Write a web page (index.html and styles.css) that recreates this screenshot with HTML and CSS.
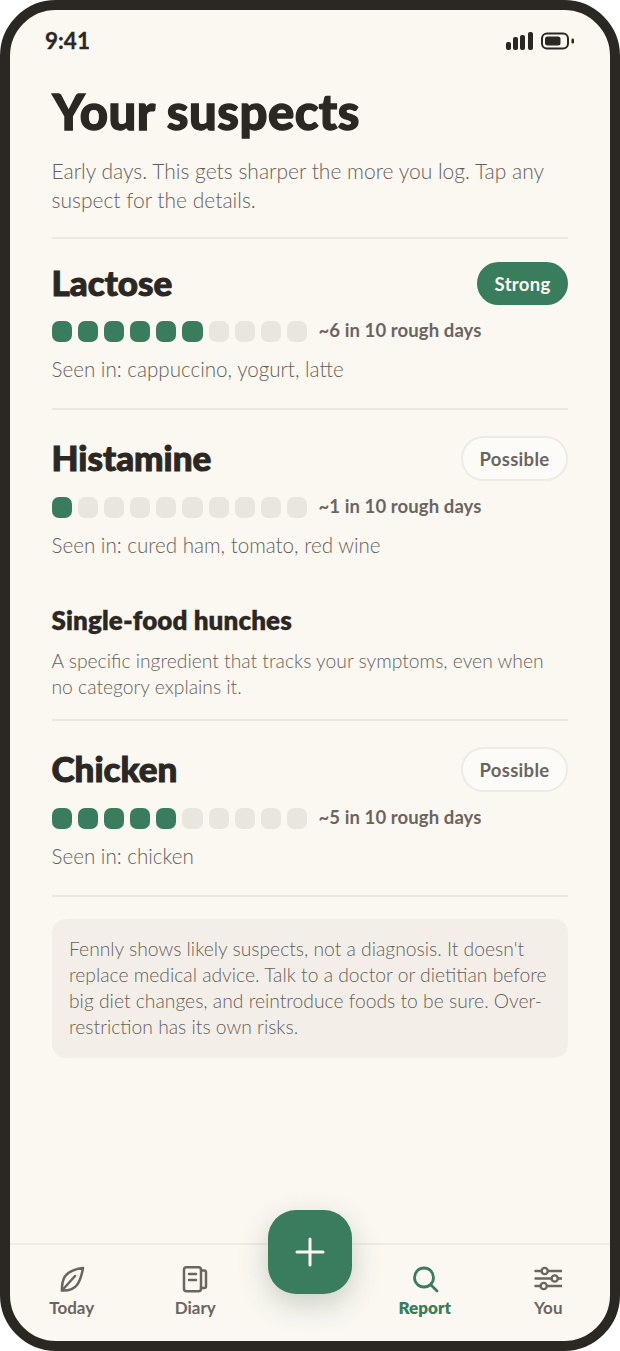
FILE: index.html
```html
<!DOCTYPE html>
<html lang="en">
<head>
    <meta charset="UTF-8">
    <meta name="viewport" content="width=device-width, initial-scale=1.0">
    <title>Your suspects</title>
    <link rel="stylesheet" href="styles.css">
</head>
<body>
    <div class="phone">
        <div class="status-bar">
            <span class="status-time">9:41</span>
            <div class="status-icons">
                <svg width="27" height="18" viewBox="0 0 27 18"><g fill="#2b2723"><rect x="0" y="10" width="5" height="8" rx="2"/><rect x="7" y="5" width="5" height="13" rx="2"/><rect x="14" y="3" width="5" height="15" rx="2"/><rect x="22" y="0" width="5" height="18" rx="2"/></g></svg>
                <svg width="33" height="18" viewBox="0 0 33 18"><rect x="1" y="1.500" width="26" height="15" rx="5" fill="none" stroke="#2b2723" stroke-width="2"/><rect x="4" y="4.500" width="15.500" height="9" rx="2.500" fill="#2b2723"/><rect x="30.500" y="6.500" width="2.500" height="5" rx="1.200" fill="#2b2723"/></svg>
            </div>
        </div>

        <main class="content">
            <h1 class="page-title">Your suspects</h1>
            <p class="page-intro">Early days. This gets sharper the more you log. Tap any suspect for the details.</p>

            <section class="suspect suspect-strong">
                <div class="suspect-head">
                    <h2 class="suspect-name">Lactose</h2>
                    <span class="pill pill-strong">Strong</span>
                </div>
                <div class="score">
                    <div class="dots">
                        <i class="dot on"></i><i class="dot on"></i><i class="dot on"></i><i class="dot on"></i><i class="dot on"></i><i class="dot on"></i><i class="dot"></i><i class="dot"></i><i class="dot"></i><i class="dot"></i>
                    </div>
                    <span class="score-text">~6 in 10 rough days</span>
                </div>
                <p class="seen-in">Seen in: cappuccino, yogurt, latte</p>
            </section>

            <section class="suspect suspect-open">
                <div class="suspect-head">
                    <h2 class="suspect-name">Histamine</h2>
                    <span class="pill">Possible</span>
                </div>
                <div class="score">
                    <div class="dots">
                        <i class="dot on"></i><i class="dot"></i><i class="dot"></i><i class="dot"></i><i class="dot"></i><i class="dot"></i><i class="dot"></i><i class="dot"></i><i class="dot"></i><i class="dot"></i>
                    </div>
                    <span class="score-text">~1 in 10 rough days</span>
                </div>
                <p class="seen-in">Seen in: cured ham, tomato, red wine</p>
            </section>

            <h3 class="hunch-title">Single-food hunches</h3>
            <p class="hunch-intro">A specific ingredient that tracks your symptoms, even when no category explains it.</p>

            <section class="suspect suspect-closed">
                <div class="suspect-head">
                    <h2 class="suspect-name">Chicken</h2>
                    <span class="pill">Possible</span>
                </div>
                <div class="score">
                    <div class="dots">
                        <i class="dot on"></i><i class="dot on"></i><i class="dot on"></i><i class="dot on"></i><i class="dot on"></i><i class="dot"></i><i class="dot"></i><i class="dot"></i><i class="dot"></i><i class="dot"></i>
                    </div>
                    <span class="score-text">~5 in 10 rough days</span>
                </div>
                <p class="seen-in">Seen in: chicken</p>
            </section>

            <p class="note">Fennly shows likely suspects, not a diagnosis. It doesn't replace medical advice. Talk to a doctor or dietitian before big diet changes, and reintroduce foods to be sure. Over-restriction has its own risks.</p>
        </main>

        <nav class="tab-bar">
            <a class="tab">
                <svg width="28" height="28" viewBox="0 0 28 28" fill="none" stroke="#6b6560" stroke-width="2.500" stroke-linecap="round" stroke-linejoin="round"><path d="M25 3C17 4 9 6.500 5.800 13.500 4.200 17 3.800 21 4 25.500c6 .3 11.500-.8 15-5.500 3.300-4.500 5-11 6-17z"/><path d="M4 25.500 17 11"/></svg>
                <span>Today</span>
            </a>
            <a class="tab">
                <svg width="28" height="28" viewBox="0 0 28 28" fill="none" stroke="#6b6560" stroke-width="2.500" stroke-linecap="round" stroke-linejoin="round"><rect x="3" y="2.300" width="17" height="24" rx="2.500"/><path d="M20 5.500h3.500a1.500 1.500 0 0 1 1.500 1.500v14.500a1.500 1.500 0 0 1-1.500 1.500H20"/><path d="M8 9h7M8 15h7"/></svg>
                <span>Diary</span>
            </a>
            <div class="tab-gap"></div>
            <a class="tab tab-active">
                <svg width="28" height="28" viewBox="0 0 28 28" fill="none" stroke="#3a7d5c" stroke-width="2.800" stroke-linecap="round" stroke-linejoin="round"><circle cx="13" cy="12.500" r="9.500"/><path d="M20 20l6 6"/></svg>
                <span>Report</span>
            </a>
            <a class="tab">
                <svg width="28" height="28" viewBox="0 0 28 28" fill="none" stroke="#6b6560" stroke-width="2.400" stroke-linecap="round"><path d="M1.500 6h6M14 6h13.500M1.500 13.500h16M24 13.500h3.500M1.500 21h5M13 21h14.500"/><circle cx="10.700" cy="6" r="3.100"/><circle cx="20.700" cy="13.500" r="3.100"/><circle cx="9.700" cy="21" r="3.100"/></svg>
                <span>You</span>
            </a>
        </nav>

        <button class="fab" aria-label="Add">
            <svg width="30" height="30" viewBox="0 0 30 30" stroke="#fbf8f2" stroke-width="3" stroke-linecap="round"><path d="M15 2v26M2 15h26"/></svg>
        </button>
    </div>
</body>
</html>
```

FILE: styles.css
```css
* {
    margin: 0;
    padding: 0;
    box-sizing: border-box;
}

body {
    font-family: "Lato", "Noto Sans", sans-serif;
    background: #fff;
    color: #2b2723;
}

.phone {
    position: relative;
    width: 620px;
    height: 1351px;
    border: 10px solid #2b2723;
    border-radius: 56px;
    background: #fbf8f2;
    display: flex;
    flex-direction: column;
    overflow: hidden;
}

.status-bar {
    display: flex;
    justify-content: space-between;
    align-items: center;
    height: 26px;
    margin-top: 16px;
    padding: 0 36px 0 35px;
}

.status-time {
    margin-top: 2px;
    font-size: 22.500px;
    font-weight: 700;
    -webkit-text-stroke: 0.3px #2b2723;
}

.status-icons {
    display: flex;
    align-items: center;
    gap: 8px;
    margin-top: 4px;
}

.content {
    flex: 1;
    padding: 0 42px 0 41.500px;
}

.page-title {
    font-size: 49px;
    font-weight: 900;
    line-height: 56px;
    margin-top: 31px;
    margin-left: 1px;
    letter-spacing: 0.500px;
    -webkit-text-stroke: 1.300px #2b2723;
}

.page-intro {
    margin-top: 17px;
    font-size: 21px;
    font-weight: 300;
    line-height: 29px;
    color: #665f5a;
    padding-bottom: 23px;
}

/* dividers sit on the top of each block */
.suspect {
    padding: 26px 0 26px;
    border-top: 2px solid #ece8e0;
}

.suspect-strong {
    padding-top: 23px;
}

.suspect-open {
    padding-bottom: 0;
}

.suspect-closed {
    border-bottom: 2px solid #ece8e0;
}

.suspect-head {
    display: flex;
    justify-content: space-between;
    align-items: center;
}

.suspect-name {
    font-size: 35px;
    font-weight: 900;
    line-height: 40px;
    padding-bottom: 3px;
    -webkit-text-stroke: 1px #2b2723;
}

.pill {
    display: flex;
    align-items: center;
    justify-content: center;
    height: 45px;
    padding: 0 16.500px;
    border: 2px solid #efebe4;
    border-radius: 23px;
    background: #fdfbf8;
    color: #6b6560;
    font-size: 18.500px;
    font-weight: 700;
    letter-spacing: 0.300px;
}

.pill-strong {
    background: #3a7d5c;
    border-color: #3a7d5c;
    color: #fbf8f2;
    height: 43px;
    padding: 0 15.500px;
}

.score {
    display: flex;
    align-items: center;
    gap: 11px;
    height: 21px;
    margin-top: 16px;
}

.dots {
    display: flex;
    gap: 6px;
}

.dot {
    display: block;
    width: 20.200px;
    height: 21px;
    border-radius: 7px;
    background: #e9e6dd;
}

.dot.on {
    background: #3a7d5c;
}

.score-text {
    font-size: 18.500px;
    font-weight: 700;
    line-height: 19px;
    letter-spacing: 0.100px;
    color: #6b6560;
    margin-bottom: 2px;
}

.seen-in {
    margin-top: 14px;
    font-size: 20.600px;
    font-weight: 300;
    line-height: 26px;
    color: #665f5a;
}

.hunch-title {
    margin-top: 46px;
    font-size: 26px;
    font-weight: 800;
    line-height: 32px;
    letter-spacing: 0.100px;
    -webkit-text-stroke: 0.300px #2b2723;
}

.hunch-intro {
    margin-top: 12px;
    font-size: 19.300px;
    font-weight: 300;
    line-height: 26px;
    color: #665f5a;
    padding-bottom: 19px;
}

.note {
    margin-top: 22px;
    padding: 16.500px 17.500px 18.500px;
    border-radius: 14px;
    background: #f3efe8;
    font-size: 19.300px;
    font-weight: 300;
    line-height: 26px;
    color: #665f5a;
}

.tab-bar {
    display: flex;
    align-items: flex-start;
    height: 98px;
    padding: 20px 0 0;
    border-top: 2px solid #efece5;
}

.tab {
    display: flex;
    flex-direction: column;
    align-items: center;
    gap: 4px;
    width: 123.500px;
    font-size: 17px;
    font-weight: 700;
    color: #6b6560;
}

.tab-gap {
    width: 106px;
}

.tab-active {
    color: #3a7d5c;
    font-weight: 800;
}

.fab {
    position: absolute;
    left: 258px;
    top: 1200px;
    width: 84px;
    height: 84px;
    border: 0;
    border-radius: 28px;
    background: #3a7d5c;
    display: flex;
    align-items: center;
    justify-content: center;
    box-shadow: 0 10px 30px rgba(43, 70, 55, 0.24);
}
```
